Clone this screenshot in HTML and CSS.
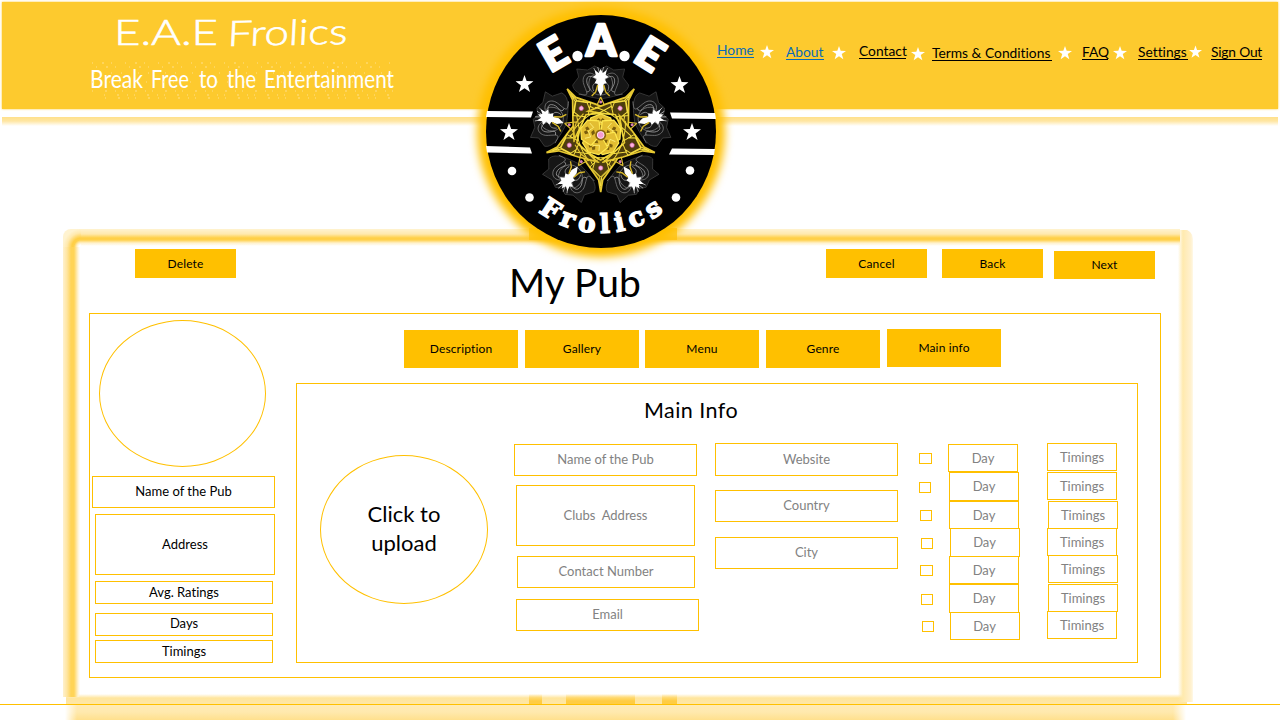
FILE: index.html
```html
<!DOCTYPE html>
<html lang="en">
<head>
<meta charset="utf-8">
<title>My Pub</title>
<link rel="stylesheet" href="styles.css">
</head>
<body>
<svg width="0" height="0" class="defs">
  <defs>
    <symbol id="star" viewBox="-10 -10 20 20"><path d="M0-10 2.4-3.2 10-3 3.9 1.6 6.2 9 0 4.6-6.2 9-3.9 1.6-10-3-2.4-3.2Z" fill="#fff"/></symbol>
  </defs>
</svg>
<header class="header">
  <svg class="brand" width="330" height="107" viewBox="80 0 330 107">
    <g fill="#fff">
      <g class="brand-name">
        <text x="114" y="45" textLength="104" lengthAdjust="spacingAndGlyphs">E.A.E</text>
        <text transform="translate(227 46) rotate(-1) skewX(-4)" textLength="120" lengthAdjust="spacingAndGlyphs">Frolics</text>
      </g>
      <g class="brand-tag">
        <text x="90" y="88" textLength="53" lengthAdjust="spacingAndGlyphs">Break</text>
        <text x="151" y="88" textLength="38" lengthAdjust="spacingAndGlyphs">Free</text>
        <text x="199" y="88" textLength="19" lengthAdjust="spacingAndGlyphs">to</text>
        <text x="227" y="88" textLength="29" lengthAdjust="spacingAndGlyphs">the</text>
        <text x="264" y="88" textLength="130" lengthAdjust="spacingAndGlyphs">Entertainment</text>
      </g>
    </g>
    <g fill="none" stroke="#ffe08a" stroke-width="1">
      <path stroke-dasharray="1 9 2 7 1 13" d="M92 63H394M96 67H390"/>
      <path stroke-dasharray="1 12 2 8 1 6" d="M92 91H394M104 95H392M105 98H390"/>
      <path stroke-dasharray="1 16 1 9" d="M94 73H394M92 82H390"/>
    </g>
  </svg>
  <nav class="nav">
    <a class="blue home">Home</a><svg class="s1"><use href="#star"/></svg>
    <a class="blue about">About</a><svg class="s2"><use href="#star"/></svg>
    <a class="contact">Contact</a><svg class="s3"><use href="#star"/></svg>
    <a class="terms">Terms &amp; Conditions</a><svg class="s4"><use href="#star"/></svg>
    <a class="faq">FAQ</a><svg class="s5"><use href="#star"/></svg>
    <a class="settings">Settings</a><svg class="s6"><use href="#star"/></svg>
    <a class="signout">Sign Out</a>
  </nav>
</header>
<div class="stripe"></div>
<main class="frame">
  <div class="toolbar">
    <button class="btn delete">Delete</button>
    <h1>My Pub</h1>
    <button class="btn cancel">Cancel</button>
    <button class="btn back">Back</button>
    <button class="btn next">Next</button>
  </div>
  <section class="card">
    <aside class="side">
      <div class="avatar"></div>
      <div class="box s-name">Name of the Pub</div>
      <div class="box s-address">Address</div>
      <div class="box s-row">Avg. Ratings</div>
      <div class="box s-row s-days">Days</div>
      <div class="box s-row s-time">Timings</div>
    </aside>
    <div class="content">
      <div class="tabs">
        <button class="tab">Description</button>
        <button class="tab g7">Gallery</button>
        <button class="tab g6">Menu</button>
        <button class="tab g7">Genre</button>
        <button class="tab g7 active">Main info</button>
      </div>
      <div class="panel">
        <h2>Main Info</h2>
        <div class="form">
          <div class="upload">Click to<br>upload</div>
          <div class="col col-a">
            <div class="box f-name">Name of the Pub</div>
            <div class="box f-address">Clubs&nbsp; Address</div>
            <div class="box f-phone">Contact Number</div>
            <div class="box f-email">Email</div>
          </div>
          <div class="col col-b">
            <div class="box f-web">Website</div>
            <div class="box f-country">Country</div>
            <div class="box f-city">City</div>
          </div>
          <div class="col checks">
            <i class="check wide"></i><i class="check c2"></i><i class="check c3 in1"></i><i class="check c4 in2"></i><i class="check c5 in1 wide"></i><i class="check c6 in2"></i><i class="check c7 in3"></i>
          </div>
          <div class="col days">
            <div class="box slot">Day</div>
            <div class="box slot tall in1">Day</div>
            <div class="box slot in1">Day</div>
            <div class="box slot tall up in2">Day</div>
            <div class="box slot up in1">Day</div>
            <div class="box slot tall in1">Day</div>
            <div class="box slot up in2">Day</div>
          </div>
          <div class="col times">
            <div class="box slot">Timings</div>
            <div class="box slot down">Timings</div>
            <div class="box slot down in1">Timings</div>
            <div class="box slot up">Timings</div>
            <div class="box slot up in1">Timings</div>
            <div class="box slot down in1">Timings</div>
            <div class="box slot up">Timings</div>
          </div>
        </div>
      </div>
    </div>
  </section>
</main>
<div class="rule"></div>
<svg class="logo" width="300" height="290" viewBox="450 -10 300 290">
  <defs>
    <filter id="glow" x="-20%" y="-20%" width="140%" height="140%"><feGaussianBlur stdDeviation="4"/></filter>
    <filter id="soft"><feGaussianBlur stdDeviation=".3"/></filter>
    <path id="arc" d="M520 193A102 102 0 0 0 682 193"/>
    <g id="plume">
      <path d="M0-36C-10-38-27-40-28-50L-22-58-24-66-13-65-6-69 0-66 6-69 13-65 24-66 22-58 28-50C27-40 10-38 0-36Z" fill="#161616" stroke="#4c4c4c" stroke-width=".6"/>
      <g fill="none" stroke="#858585" stroke-width=".7">
        <path d="M0-40C-9-40-14-48-11-56S-3-56-1-47M0-40C9-40 14-48 11-56S3-56 1-47M-3-57C-11-67-20-60-17-51S-10-38-22-41M3-57C11-67 20-60 17-51S10-38 22-41"/>
        <path d="M-4-55C-9-60-14-60-14-54S-7-44-14-43M4-55C9-60 14-60 14-54S7-44 14-43M-4-52C-8-52-9-48-7-44M4-52C8-52 9-48 7-44" stroke="#aaa"/>
        <path d="M-2-58-7-67M0-58-3-68M0-58 3-68M2-58 7-67" stroke="#ccc"/>
      </g>
      <path d="M0-66 2-62 6-65 5-60 8-58 4-56 6-52 3-51 3-45 0-39-3-45-3-51-6-52-4-56-8-58-5-60-6-65-2-62Z" fill="#fff"/>
      <path d="M-3-50-5-43-9-39M3-50 5-43 9-39" fill="none" stroke="#d8b92a" stroke-width="1.4"/>
    </g>
    <g id="ray">
      <path d="M0 57 2 45 14 28 24 12 12 18 0 25-12 18-24 12-14 28-2 45Z" fill="#4d3d07" stroke="#e6c830" stroke-width="1.7"/>
      <path d="M0 51-1 42-11 32-2 24-18 15M0 51 1 42 11 32 2 24 18 15M-6 27-8 34 0 42 8 34 6 27M-21 19C-9 24 9 24 21 19M-15 15-8 30M15 15 8 30" fill="none" stroke="#f4dc42" stroke-width="1"/>
      <path d="M0-38-5-27-15-23M0-38 5-27 15-23M-5-27H5" fill="none" stroke="#e0c132" stroke-width="1.2"/>
    </g>
    <g id="gem">
      <circle cy="33" r="2.300" fill="#ffb2e0" stroke="#a54887" stroke-width=".6"/>
      <circle cy="-33" r="1.500" fill="#d57db4"/>
    </g>
    <g id="petal">
      <path d="M0 21-10 17-13 6 0 0 13 6 10 17Z" fill="#e3be32" stroke="#ffe951" stroke-width="1.2"/>
      <path d="M-4 15-2 12 0 15-2 17ZM4 15 2 12 0 15 2 17ZM-3 8 0 6 3 8 0 10Z" fill="#7a5d0b"/>
      <path d="M-8 14-5 9 0 13 5 9 8 14" fill="none" stroke="#fff07a" stroke-width=".8"/>
    </g>
  </defs>
  <path d="M529 228H677V240H529Z" fill="#ffc20d" opacity=".75"/>
  <ellipse cx="601" cy="132" rx="124" ry="125" fill="#ffc000" filter="url(#glow)"/>
  <ellipse cx="601" cy="131.500" rx="115" ry="116.500" fill="#000"/>
  <g fill="#fff">
    <path d="M487 111 533 111.500 531 117.500 486 117ZM486 146 530 147.500 532 153.500 487 152.500ZM670 112.500 715 113 716 119 672 118.500ZM672 148.500 715 149 714 155 669 154.500Z"/>
    <circle cx="512" cy="171" r="4.300"/><circle cx="529.500" cy="197.500" r="4.300"/><circle cx="690" cy="170.500" r="4.300"/><circle cx="676" cy="197.500" r="4.300"/>
    <circle cx="577.500" cy="56" r="5.200"/><circle cx="624.500" cy="56" r="5.200"/>
    <g class="logo-top" text-anchor="middle">
      <text transform="translate(561 67) rotate(-30)">E</text>
      <text transform="translate(601 56)">A</text>
      <text transform="translate(642 67) rotate(32)">E</text>
    </g>
    <text class="logo-bottom"><textPath href="#arc" startOffset="26" textLength="135" lengthAdjust="spacing">Frolics</textPath></text>
  </g>
  <use href="#star" x="515.500" y="75" width="18" height="18"/><use href="#star" x="670.500" y="76" width="18" height="18"/>
  <use href="#star" x="500" y="123" width="18" height="18"/><use href="#star" x="683" y="123" width="18" height="18"/>
  <g transform="translate(600.700 135)" filter="url(#soft)">
    <use href="#plume"/><use href="#plume" transform="rotate(72)"/><use href="#plume" transform="rotate(144)"/><use href="#plume" transform="rotate(216)"/><use href="#plume" transform="rotate(288)"/>
    <use href="#ray"/><use href="#ray" transform="rotate(72)"/><use href="#ray" transform="rotate(144)"/><use href="#ray" transform="rotate(216)"/><use href="#ray" transform="rotate(288)"/>
    <use href="#gem"/><use href="#gem" transform="rotate(72)"/><use href="#gem" transform="rotate(144)"/><use href="#gem" transform="rotate(216)"/><use href="#gem" transform="rotate(288)"/>
    <g transform="rotate(180)"><use href="#petal"/><use href="#petal" transform="rotate(72)"/><use href="#petal" transform="rotate(144)"/><use href="#petal" transform="rotate(216)"/><use href="#petal" transform="rotate(288)"/></g>
    <circle r="5.500" fill="#8b6611"/><circle r="3.400" fill="#f59bcf" stroke="#ffe1f4"/>
  </g>
</svg>
</body>
</html>
```
FILE: styles.css
```css
* { box-sizing: border-box; }
body { margin: 0; width: 1280px; height: 720px; overflow: hidden; position: relative; background: #fff; color: #000; font-family: Lato, "Open Sans", sans-serif; font-variant-ligatures: none; }
.defs { position: absolute; }
h1, h2 { margin: 0; font-weight: 400; white-space: nowrap; }
button { border: 0; padding: 0; background: #ffc000; color: #000; font: 12px/28px Lato, sans-serif; letter-spacing: .15px; }

.header { display: flex; margin: 2px 2px 0; height: 107px; background: #fdca2e; box-shadow: 0 0 2px #fdca2e; }
.brand { margin: -2px 0 0 78px; flex: none; overflow: visible; }
.brand-name { font: 300 35px Lato, sans-serif; stroke: #fff; stroke-width: .6px; }
.brand-tag { font: 400 25px Lato, sans-serif; }
.nav { display: flex; align-items: flex-start; margin-left: 307px; padding-top: 40px; }
.nav a { flex: none; height: 16px; font-size: 13.8px; line-height: 16px; border-bottom: 1px solid #000; white-space: nowrap; }
.nav .blue { color: #0a6ab5; border-color: #0a6ab5; }
.nav svg { flex: none; width: 14px; height: 14px; }
.nav .home { width: 37px; }
.nav .about { width: 38px; margin: 2px 0 0 12px; }
.nav .contact { width: 47px; margin: 1px 0 0 13px; }
.nav .terms { width: 120px; margin: 3px 0 0 7px; }
.nav .faq { width: 26px; margin: 2px 0 0 10px; }
.nav .settings { width: 50px; margin: 2px 0 0 11px; }
.nav .signout { width: 51px; margin: 2px 0 0 9px; letter-spacing: -.2px; }
.nav .s1 { margin: 3px 0 0 6px; }
.nav .s2 { margin: 4px 0 0 8px; }
.nav .s3 { margin: 5px 0 0 5px; }
.nav .s4 { margin: 4px 0 0 6px; }
.nav .s5 { margin: 4px 0 0 5px; }
.nav .s6 { margin: 3px 0 0 1px; width: 13px; }
.stripe { margin: 8px 2px 0; height: 9px; background: linear-gradient(#ffe08a, #ffe6a3 45%, #fff); }

.frame { margin: 103px 0 0 63px; width: 1130px; height: 491px; border-radius: 8px 10px 0 0; overflow: hidden;
  background:
    linear-gradient(to bottom, transparent, #ffcc43 70%) 466px 465px / 13px 10px no-repeat,
    linear-gradient(to bottom, transparent, #ffcc43 70%) 503px 465px / 69px 10px no-repeat,
    linear-gradient(to bottom, transparent, #ffcc43 70%) 599px 465px / 15px 10px no-repeat,
    radial-gradient(circle at 100% 100%, rgba(255,255,255,0) 2px, #fff1cb 4px, #ffd14d 7px, #ffcf45 9px, #ffe9ae 14px, #fff3d0 18px) 0 0 / 18px 18px no-repeat,
    linear-gradient(to bottom, #fff3d0, #ffe9ae 5px, #ffcf45 9px, #ffd14d 11px, #fff1cb 14px, rgba(255,255,255,0) 17px) 18px 0 / 1099px 18px no-repeat,
    linear-gradient(to right, #fff1cd, #ffe5a0 4px, #ffd457 8px, #ffd457 11px, #fff3d4 15px, rgba(255,255,255,0) 17px) 0 18px / 18px 450px no-repeat,
    linear-gradient(to right, rgba(255,255,255,0), #ffeaae 5px, #ffedbf 9px, #fff1cf 13px, #fff9e8 15px) 1115px 1px / 15px 472px no-repeat,
    linear-gradient(to bottom, rgba(255,255,255,0), #ffe59d 4px, #ffe7a5 10px) 3px 465px / 1121px 10px no-repeat,
    linear-gradient(to right, #fff, rgba(255,255,255,0)) 2px 475px / 12px 16px no-repeat,
    linear-gradient(to left, #fff, rgba(255,255,255,0)) 1110px 475px / 13px 16px no-repeat,
    linear-gradient(to bottom, #ffebb7, #ffe9ae 8px, #ffe08d 16px) 2px 475px / 1121px 16px no-repeat; }
.toolbar { display: flex; align-items: flex-start; height: 84px; padding: 20px 0 0 72px; }
.btn { flex: none; width: 101px; height: 29px; }
.toolbar h1 { width: 130px; margin: 9px 0 0 273px; font-size: 39px; line-height: 48px; }
.cancel { margin-left: 187px; line-height: 30px; }
.back { margin-left: 15px; line-height: 30px; }
.next { margin: 2px 0 0 11px; height: 28px; }
.card { display: flex; align-items: flex-start; margin-left: 26px; width: 1072px; height: 365px; border: 1px solid #ffc000; }
.side { width: 206px; padding: 6px 0 0 2px; flex: none; }
.avatar { width: 167px; height: 147px; margin: 0 0 9px 7px; border: 1px solid #ffc000; border-radius: 50%; }
.box { display: flex; align-items: center; justify-content: center; flex: none; padding-bottom: 2px; border: 1px solid #ffc000; font-size: 13px; line-height: 16px; white-space: nowrap; }
.s-name { width: 183px; height: 32px; }
.s-address { width: 180px; height: 61px; margin: 6px 0 6px 3px; }
.s-row { width: 178px; height: 23px; margin-left: 3px; padding-bottom: 1px; }
.s-days { margin-top: 9px; padding-bottom: 3px; }
.s-time { margin-top: 4px; }

.tabs { display: flex; align-items: flex-start; padding: 16px 0 0 108px; height: 69px; }
.tab { width: 114px; height: 38px; line-height: 38px; flex: none; }
.g7 { margin-left: 7px; }
.g6 { margin-left: 6px; }
.active { margin-top: -1px; }
.panel { width: 842px; height: 280px; border: 1px solid #ffc000; }
h2 { padding: 12px 0 0 347px; height: 59px; font-size: 21.500px; line-height: 28px; letter-spacing: .45px; }
.form { display: flex; align-items: flex-start; color: #828282; }
.upload { flex: none; width: 168px; height: 149px; margin: 12px 0 0 23px; padding-top: 43px; border: 1px solid #ffc000; border-radius: 50%; color: #000; font-size: 22px; line-height: 29px; text-align: center; }
.col { display: flex; flex-direction: column; flex: none; }
.col-a { width: 185px; margin: 1px 0 0 26px; }
.f-name { width: 183px; height: 32px; }
.f-address { width: 179px; height: 61px; margin: 9px 0 10px 2px; }
.f-phone { width: 178px; height: 32px; margin-left: 3px; }
.f-email { width: 183px; height: 32px; margin: 11px 0 0 2px; }
.col-b { width: 183px; margin-left: 16px; }
.f-web { height: 33px; }
.f-country { height: 32px; margin: 14px 0 15px; }
.f-city { height: 32px; }
.checks { width: 29px; margin: 10px 0 0 21px; }
.check { width: 12px; height: 11px; border: 1px solid #ffc000; }
.wide { width: 13px; }
.c2, .c6 { margin-top: 18px; }
.c3, .c4 { margin-top: 17px; }
.c5, .c7 { margin-top: 16px; }
.days { width: 99px; margin-top: 1px; }
.times { width: 72px; }
.slot { width: 70px; height: 28px; padding-bottom: 1px; }
.tall { height: 29px; }
.up { margin-top: -1px; }
.down { margin-top: 1px; }
.in1 { margin-left: 1px; }
.in2 { margin-left: 2px; padding-right: 1px; }
.in3 { margin-left: 3px; }
.rule { position: absolute; left: 0; top: 704px; width: 1280px; height: 1px; background: #ffc000; }
.logo { position: absolute; left: 450px; top: -10px; }
.logo-top { font: 900 43px Lato, sans-serif; stroke: #fff; stroke-width: 2.500px; stroke-linejoin: round; }
.logo-bottom { font: bold 26px "DejaVu Serif", serif; stroke: #fff; stroke-width: 1.500px; }
```
